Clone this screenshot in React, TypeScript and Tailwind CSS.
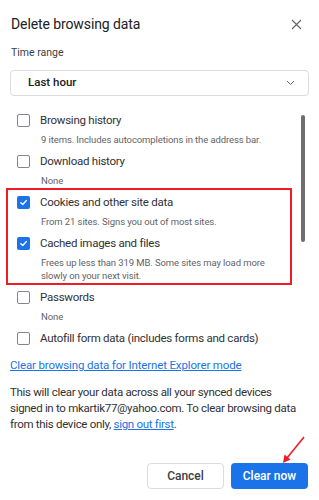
import React from "react";

function Check({ checked }: { checked: boolean }) {
  if (checked) {
    return (
      <div className="w-[13px] h-[13px] rounded-[2px] bg-[#1a73e8] flex items-center justify-center shrink-0">
        <svg width="9" height="9" viewBox="0 0 10 10">
          <path d="M2 5.2 L4.2 7.3 L8.2 2.8" stroke="white" strokeWidth="1.5" fill="none" strokeLinecap="round" strokeLinejoin="round" />
        </svg>
      </div>
    );
  }
  return <div className="w-[13px] h-[13px] rounded-[2px] border-[1.5px] border-[#80868b] shrink-0" />;
}

function Item({ label, sub, checked }: { label: string; sub?: React.ReactNode; checked: boolean }) {
  return (
    <div className="flex flex-col">
      <div className="flex items-center h-[19px] pl-[17px]">
        <Check checked={checked} />
        <span className="ml-[10px] text-[11.5px] tracking-[-0.25px] text-[#303134] whitespace-nowrap">{label}</span>
      </div>
      {sub && (
        <div className="pl-[41px] mt-[3px] text-[9.5px] tracking-[-0.1px] leading-[13px] text-[#5f6368] whitespace-nowrap">
          {sub}
        </div>
      )}
    </div>
  );
}

export default function App() {
  return (
    <div
      className="relative w-[319px] h-[500px] bg-white overflow-hidden"
      style={{ fontFamily: "Roboto, 'Liberation Sans', sans-serif" }}
    >
      <div className="flex items-center justify-between h-[24px] mt-[12px] pl-[11px] pr-[17px]">
        <span className="text-[14px] tracking-[-0.1px] text-[#202124] leading-[24px]">Delete browsing data</span>
        <svg width="11" height="11" viewBox="0 0 11 11">
          <path d="M1 1 L10 10 M10 1 L1 10" stroke="#5f6368" strokeWidth="1.1" />
        </svg>
      </div>
      <div className="mt-[9px] pl-[11px] text-[10.5px] leading-[16px] text-[#3c4043]">Time range</div>
      <div className="mt-[9px] mx-[10px] h-[26px] border border-[#dadce0] rounded-[4px] flex items-center justify-between pl-[17px] pr-[13px]">
        <span className="text-[11.5px] font-medium text-[#202124]">Last hour</span>
        <svg width="9" height="6" viewBox="0 0 9 6">
          <path d="M1 1 L4.5 4.5 L8 1" stroke="#5f6368" strokeWidth="1" fill="none" />
        </svg>
      </div>

      <div className="relative mt-[15px]">
        <div className="flex flex-col gap-[6px]">
          <Item label="Browsing history" sub="9 items. Includes autocompletions in the address bar." checked={false} />
          <Item label="Download history" sub="None" checked={false} />
          <Item label="Cookies and other site data" sub="From 21 sites. Signs you out of most sites." checked={true} />
          <Item
            label="Cached images and files"
            sub={
              <>
                Frees up less than 319 MB. Some sites may load more
                <br />
                slowly on your next visit.
              </>
            }
            checked={true}
          />
          <Item label="Passwords" sub="None" checked={false} />
          <Item label="Autofill form data (includes forms and cards)" checked={false} />
        </div>
        <div className="absolute left-[301px] top-[4px] w-[4px] h-[127px] rounded-full bg-[#6e6e6e]" />
        <div className="absolute left-[6px] top-[77px] w-[286px] h-[97px] border-2 border-[#ee1c25]" />
      </div>

      <div className="mt-[9px] pl-[10px] text-[11.5px] tracking-[-0.15px] leading-[16px] text-[#1a73e8] underline whitespace-nowrap">
        Clear browsing data for Internet Explorer mode
      </div>
      <p className="mt-[11px] pl-[10px] text-[11.5px] tracking-[-0.3px] leading-[16px] text-[#303134] whitespace-nowrap">
        This will clear your data across all your synced devices
        <br />
        signed in to mkartik77@yahoo.com. To clear browsing data
        <br />
        from this device only, <span className="text-[#1a73e8] underline">sign out first</span>.
      </p>

      <div className="absolute left-0 right-0 top-[463px] flex justify-end gap-[7px] pr-[11px]">
        <div className="w-[77px] h-[26px] border border-[#dadce0] rounded-[4px] flex items-center justify-center text-[12px] font-medium text-[#3c4043]">
          Cancel
        </div>
        <div className="w-[77px] h-[26px] bg-[#1a73e8] rounded-[4px] flex items-center justify-center text-[12px] font-medium text-white">
          Clear now
        </div>
      </div>

      <svg className="absolute left-0 top-0" width="319" height="500" viewBox="0 0 319 500">
        <line x1="304" y1="437" x2="287" y2="458" stroke="#ee1c25" strokeWidth="1.6" />
        <path d="M283 463 L284.5 454.5 L290.5 459.5 Z" fill="#ee1c25" />
      </svg>
    </div>
  );
}
